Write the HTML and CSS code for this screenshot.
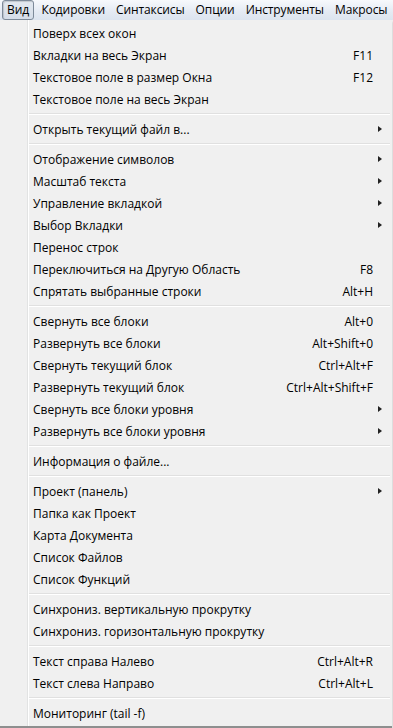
FILE: index.html
```html
<!DOCTYPE html>
<html lang="ru">
<head>
    <meta charset="UTF-8">
    <meta name="viewport" content="width=device-width, initial-scale=1.0">
    <title>Вид</title>
    <link rel="stylesheet" href="styles.css">
</head>
<body>
    <div class="menubar">
        <span class="bar-item active">Вид</span>
        <span class="bar-item">Кодировки</span>
        <span class="bar-item">Синтаксисы</span>
        <span class="bar-item">Опции</span>
        <span class="bar-item">Инструменты</span>
        <span class="bar-item">Макросы</span>
    </div>

    <ul class="menu">
        <li class="item"><span class="label">Поверх всех окон</span></li>
        <li class="item"><span class="label">Вкладки на весь Экран</span><span class="key">F11</span></li>
        <li class="item"><span class="label">Текстовое поле в размер Окна</span><span class="key">F12</span></li>
        <li class="item"><span class="label">Текстовое поле на весь Экран</span></li>
        <li class="sep"></li>
        <li class="item sub"><span class="label">Открыть текущий файл в...</span></li>
        <li class="sep"></li>
        <li class="item sub"><span class="label">Отображение символов</span></li>
        <li class="item sub"><span class="label">Масштаб текста</span></li>
        <li class="item sub"><span class="label">Управление вкладкой</span></li>
        <li class="item sub"><span class="label">Выбор Вкладки</span></li>
        <li class="item"><span class="label">Перенос строк</span></li>
        <li class="item"><span class="label">Переключиться на Другую Область</span><span class="key">F8</span></li>
        <li class="item"><span class="label">Спрятать выбранные строки</span><span class="key">Alt+H</span></li>
        <li class="sep"></li>
        <li class="item"><span class="label">Свернуть все блоки</span><span class="key">Alt+0</span></li>
        <li class="item"><span class="label">Развернуть все блоки</span><span class="key">Alt+Shift+0</span></li>
        <li class="item"><span class="label">Свернуть текущий блок</span><span class="key">Ctrl+Alt+F</span></li>
        <li class="item"><span class="label">Развернуть текущий блок</span><span class="key">Ctrl+Alt+Shift+F</span></li>
        <li class="item sub"><span class="label">Свернуть все блоки уровня</span></li>
        <li class="item sub"><span class="label">Развернуть все блоки уровня</span></li>
        <li class="sep"></li>
        <li class="item"><span class="label">Информация о файле...</span></li>
        <li class="sep"></li>
        <li class="item sub"><span class="label">Проект (панель)</span></li>
        <li class="item"><span class="label">Папка как Проект</span></li>
        <li class="item"><span class="label">Карта Документа</span></li>
        <li class="item"><span class="label">Список Файлов</span></li>
        <li class="item"><span class="label">Список Функций</span></li>
        <li class="sep"></li>
        <li class="item"><span class="label">Синхрониз. вертикальную прокрутку</span></li>
        <li class="item"><span class="label">Синхрониз. горизонтальную прокрутку</span></li>
        <li class="sep"></li>
        <li class="item"><span class="label">Текст справа Налево</span><span class="key">Ctrl+Alt+R</span></li>
        <li class="item"><span class="label">Текст слева Направо</span><span class="key">Ctrl+Alt+L</span></li>
        <li class="sep"></li>
        <li class="item"><span class="label">Мониторинг (tail -f)</span></li>
    </ul>
</body>
</html>
```

FILE: styles.css
```css
body {
    margin: 0;
    padding: 0;
    width: 393px;
    height: 728px;
    overflow: hidden;
    background: #f0f0f0;
    font-family: 'Open Sans', 'Noto Sans', sans-serif;
    font-size: 12px;
    color: #000;
}

.menubar {
    height: 20px;
    display: flex;
    align-items: center;
    padding-left: 2px;
    background: linear-gradient(#f7f9fc, #e4eaf3 60%, #dce4ef);
    white-space: nowrap;
    overflow: hidden;
}

.bar-item {
    padding: 0 4.5px;
    line-height: 18px;
    border: 1px solid transparent;
    letter-spacing: -0.1px;
}

.active {
    border-color: #7d8a99;
    border-radius: 3px;
    background: linear-gradient(#e3e9f0, #d5dde8);
    box-shadow: inset 1px 1px 1px rgba(0,0,0,0.15);
    padding: 0 4px;
    margin-right: 2px;
}

.menu {
    list-style: none;
    margin: 0;
    padding: 2px 0 0 0;
    width: 392px;
    height: 704px;
    background: #f0f0f0;
    border-bottom: 2px solid #8e8f8f;
    box-shadow: 0 2px 2px rgba(0,0,0,0.25);
    position: relative;
}

/* gutter line */
.menu::before {
    content: "";
    position: absolute;
    left: 27px;
    top: 0;
    bottom: 0;
    width: 1px;
    background: #e2e3e3;
    border-right: 1px solid #fff;
}

.item {
    height: 22px;
    display: flex;
    align-items: center;
    padding-left: 33px;
    padding-right: 19px;
    white-space: nowrap;
}

.label {
    flex: 1;
}

.key {
    text-align: right;
}

.sub {
    position: relative;
}

.sub::after {
    content: "";
    position: absolute;
    right: 10px;
    top: 8px;
    border-left: 4px solid #222;
    border-top: 3.5px solid transparent;
    border-bottom: 3.5px solid transparent;
}

.sep {
    height: 8px;
    display: flex;
    align-items: center;
    padding-left: 28px;
    padding-right: 2px;
}

.sep::before {
    content: "";
    flex: 1;
    height: 1px;
    background: #e0e0e0;
    border-bottom: 1px solid #fff;
}
```
